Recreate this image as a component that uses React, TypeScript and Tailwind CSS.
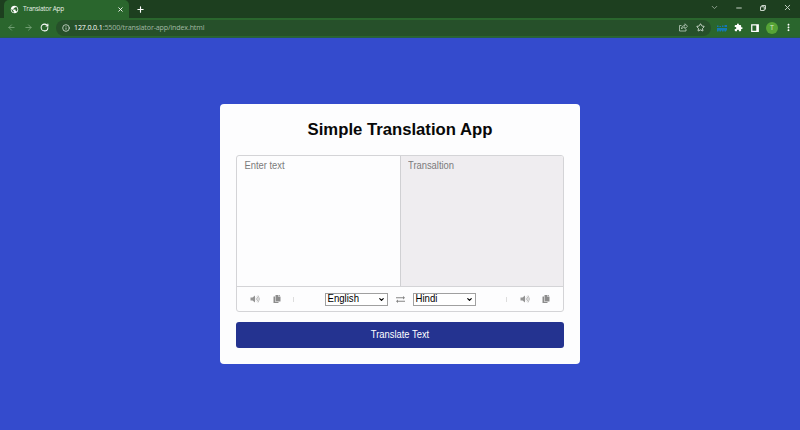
import React from "react";
import { FaCopy } from "react-icons/fa";
import {
  ArrowLeft,
  ArrowRight,
  ChevronDown,
  Info,
  Minus,
  Plus,
  RotateCw,
  Star,
  X,
} from "lucide-react";
import { MdExtension, MdMoreVert, MdPublic } from "react-icons/md";

function SpeakerIcon() {
  return (
    <svg viewBox="0 0 20 16" className="h-[8px] w-[10px]" fill="none" stroke="#aaa" strokeWidth="1.5">
      <path d="M1 5h4l5-4v14l-5-4H1z" fill="#949494" stroke="none" />
      <path d="M12 5.5q2 2.500 0 5M14 3q4.500 5 0 10M16 1q6 7 0 14" />
    </svg>
  );
}

function SwapIcon() {
  return (
    <svg viewBox="0 0 18 14" className="h-[7px] w-[9px]" fill="#858585">
      <path d="M0 2.500h14V0l4 3.500L14 7V4.500H0zM18 9.500H4V7l-4 3.500L4 14v-2.500h14z" />
    </svg>
  );
}

function ShareIcon() {
  return (
    <svg viewBox="0 0 18 18" className="size-[9px]" fill="none" stroke="#b4c6b6" strokeWidth="1.700">
      <path d="M5 5H1v11h13v-4M5 12c0-5 3-7 7-7V1.500l5 5-5 5V8c-3 0-5 1-7 4z" />
    </svg>
  );
}

function RestoreIcon() {
  return (
    <svg viewBox="0 0 12 12" className="mr-[17px] size-[6px]" fill="none" stroke="#c8d3c8" strokeWidth="2">
      <path d="M1 3.500h7.500V11H1zM3.500 3V1H11v7.500H9" />
    </svg>
  );
}

function Browser() {
  return (
    <header className="font-['Open_Sans','Noto_Sans',sans-serif]">
      <div className="flex h-[18px] bg-[#1d3f1f] pl-[4px]">
        <div className="flex w-[125px] items-center rounded-t-[5px] bg-[#2a662d] pr-[5px] pl-[6px] text-white">
          <MdPublic className="size-[9px]" />
          <span className="ml-[4px] flex-1 text-[6.500px] leading-none tracking-[-0.280px] text-[#e4eee4]">
            Translator App
          </span>
          <X className="size-[7px]" strokeWidth={3} />
        </div>
        <Plus className="mt-[4.500px] ml-[7px] size-[9px] text-white" strokeWidth={3} />
        <div className="ml-auto flex items-center pr-[8px] pb-[3px] text-[#c8d3c8]">
          <ChevronDown className="mr-[16px] size-[9px] text-[#93a594]" strokeWidth={2.5} />
          <Minus className="mr-[17px] size-[8px]" strokeWidth={3} />
          <RestoreIcon />
          <X className="size-[9px]" strokeWidth={2.5} />
        </div>
      </div>
      <div className="flex h-[20px] items-center border-b border-[#275c46] bg-[#2a662d] pr-[8px] pl-[7px]">
        <ArrowLeft className="size-[9px] text-[#73a075]" strokeWidth={2.5} />
        <ArrowRight className="ml-[8px] size-[9px] text-[#73a075]" strokeWidth={2.5} />
        <RotateCw className="ml-[7px] size-[9px] text-white" strokeWidth={2.700} />
        <div className="ml-[7px] flex h-[16px] w-[655px] items-center rounded-full bg-[#26502a] pr-[6px] pl-[6px]">
          <Info className="size-[8px] text-[#d0dcd0]" strokeWidth={2.5} />
          <span className="ml-[4px] flex-1 text-[7.100px] leading-none tracking-[-0.140px] text-[#a3b9a4]">
            <span className="inline-block origin-left scale-y-110">
              <span className="text-white">127.0.0.1</span>:5500/translator-app/index.html
            </span>
          </span>
          <ShareIcon />
          <Star className="ml-[8px] size-[9px] text-[#d4dfd4]" strokeWidth={2.5} />
        </div>
        <svg viewBox="0 0 20 14" className="ml-[6px] h-[8px] w-[10px]" fill="#1478b4">
          <path d="M0 7h20v5h-2v2h-3v-2h-2v2h-3v-2H8v2H5v-2H3v2H0zM0 2h3v3H0zM5 3h3v2H5zM10 2h3v3h-3zM15 1h5v4h-5z" />
        </svg>
        <MdExtension className="ml-[7px] size-[9px] text-white" />
        <svg viewBox="0 0 16 16" className="ml-[8px] size-[8px] shrink-0" fill="none" stroke="white">
          <path d="M1.500 1.500h13v13h-13z" strokeWidth="2.500" />
          <path d="M12.500 2v12" strokeWidth="4" />
        </svg>
        <div className="ml-[7px] flex size-[12px] items-center justify-center rounded-full bg-[#56a336] text-[7px] leading-none text-[#d4eac9]">
          T
        </div>
        <MdMoreVert className="ml-auto -mr-[2px] size-[11px] text-white" />
      </div>
    </header>
  );
}

function Actions() {
  return (
    <>
      <SpeakerIcon />
      <FaCopy className="size-[8px] text-[#8c8c8c]" />
    </>
  );
}

function Language({ name }: { name: string }) {
  return (
    <div className="flex h-[13px] w-[63px] items-center justify-between border border-[#a0a0a0] bg-white px-[2px] text-[9.600px] leading-none text-black">
      <span className="inline-block scale-y-[1.1]">{name}</span>
      <ChevronDown className="size-[7px]" strokeWidth={4} />
    </div>
  );
}

export default function App() {
  return (
    <div className="flex h-[430px] w-[800px] flex-col overflow-hidden bg-[#344bcd] font-['Liberation_Sans',Arial,sans-serif]">
      <Browser />
      <main className="mt-[66px] mr-auto ml-[220px] flex h-[260px] w-[360px] flex-col rounded-[4px] bg-[#fdfdfe] px-[16px]">
        <h1 className="mt-[15px] h-[20px] text-center text-[16.700px] leading-[22px] font-bold whitespace-nowrap text-[#080808]">
          Simple Translation App
        </h1>
        <section className="mt-[16px] h-[157px] overflow-hidden rounded-[3px] border border-[#d4d4d7]">
          <div className="flex h-[130px] text-[9.400px] leading-[12px] text-[#7b7b7b]">
            <div className="w-[164px] border-r border-[#d0d0d3] pt-[4px] pl-[7.500px]">
              <span className="inline-block scale-y-[1.13]">Enter text</span>
            </div>
            <div className="flex-1 bg-[#efedf0] pt-[4px] pl-[7px]">
              <span className="inline-block scale-y-[1.13]">Transaltion</span>
            </div>
          </div>
          <div className="flex h-[25px] items-center border-t border-[#d4d4d7] px-[13px]">
            <div className="flex w-[44px] items-center justify-between">
              <Actions />
              <span className="h-[5px] w-px bg-[#ddd]" />
            </div>
            <div className="mx-auto flex items-center gap-[8px]">
              <Language name="English" />
              <SwapIcon />
              <Language name="Hindi" />
            </div>
            <div className="flex w-[44px] items-center justify-between">
              <span className="h-[5px] w-px bg-[#ddd]" />
              <Actions />
            </div>
          </div>
        </section>
        <button className="mt-[10px] h-[26px] rounded-[3px] bg-[#243390] text-[9.400px] leading-none text-white">
          <span className="inline-block scale-y-[1.13]">Translate Text</span>
        </button>
      </main>
    </div>
  );
}
